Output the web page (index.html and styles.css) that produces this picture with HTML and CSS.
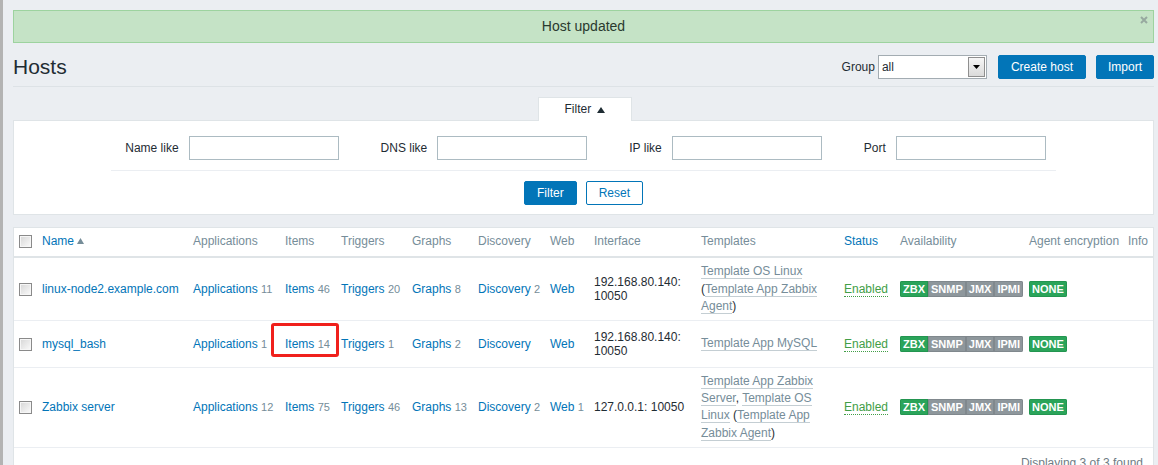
FILE: index.html
```html
<!DOCTYPE html>
<html lang="en">
<head>
<meta charset="utf-8">
<title>Hosts</title>
<link rel="stylesheet" href="styles.css">
</head>
<body>
<div class="page">
  <div class="msg-good">
    Host updated
    <span class="msg-close"><svg width="8" height="8" viewBox="0 0 8 8"><path d="M1 1L7 7M7 1L1 7" stroke="#97a99f" stroke-width="2"/></svg></span>
  </div>

  <header class="header">
    <h1 class="title">Hosts</h1>
    <div class="controls">
      <span class="ctl-label">Group</span>
      <div class="select">
        <span class="select-value">all</span>
        <span class="select-btn"><svg width="7" height="4" viewBox="0 0 7 4"><path d="M0 0H7L3.5 4Z" fill="#000"/></svg></span>
      </div>
      <button class="btn btn-create">Create host</button>
      <button class="btn btn-import">Import</button>
    </div>
  </header>

  <div class="filter">
    <div class="filter-tabs">
      <div class="filter-tab">Filter <svg width="8" height="6" viewBox="0 0 8 6"><path d="M0 6L4 0L8 6Z" fill="#1f2c33"/></svg></div>
    </div>
    <div class="filter-panel">
      <div class="filter-row-wrap">
        <div class="filter-row">
          <div class="filter-field"><span>Name like</span><input class="input" type="text"></div>
          <div class="filter-field"><span>DNS like</span><input class="input" type="text"></div>
          <div class="filter-field"><span>IP like</span><input class="input" type="text"></div>
          <div class="filter-field"><span>Port</span><input class="input" type="text"></div>
        </div>
      </div>
      <div class="filter-buttons">
        <button class="btn">Filter</button>
        <button class="btn btn-alt">Reset</button>
      </div>
    </div>
  </div>

  <div class="list">
    <table class="hosts">
      <colgroup>
        <col class="c-chk"><col class="c-name"><col class="c-app"><col class="c-items"><col class="c-trig"><col class="c-graphs"><col class="c-disc"><col class="c-web"><col class="c-iface"><col class="c-tpl"><col class="c-status"><col class="c-avail"><col class="c-enc"><col class="c-info">
      </colgroup>
      <thead>
        <tr>
          <th><span class="chk"></span></th>
          <th><a class="link" href="#">Name</a><svg class="sort" width="7" height="6" viewBox="0 0 7 6"><path d="M0 6L3.5 0L7 6Z" fill="#768d99"/></svg></th>
          <th>Applications</th>
          <th>Items</th>
          <th>Triggers</th>
          <th>Graphs</th>
          <th>Discovery</th>
          <th>Web</th>
          <th>Interface</th>
          <th>Templates</th>
          <th><a class="link" href="#">Status</a></th>
          <th>Availability</th>
          <th>Agent encryption</th>
          <th>Info</th>
        </tr>
      </thead>
      <tbody>
        <tr>
          <td><span class="chk"></span></td>
          <td><a class="link" href="#">linux-node2.example.com</a></td>
          <td class="nw"><a class="link" href="#">Applications</a> <span class="count">11</span></td>
          <td class="nw"><a class="link" href="#">Items</a> <span class="count">46</span></td>
          <td class="nw"><a class="link" href="#">Triggers</a> <span class="count">20</span></td>
          <td class="nw"><a class="link" href="#">Graphs</a> <span class="count">8</span></td>
          <td class="nw"><a class="link" href="#">Discovery</a> <span class="count">2</span></td>
          <td class="nw"><a class="link" href="#">Web</a></td>
          <td>192.168.80.140: 10050</td>
          <td class="tpl"><a class="link-alt" href="#">Template OS Linux</a> (<a class="link-alt" href="#">Template App Zabbix Agent</a>)</td>
          <td><span class="enabled">Enabled</span></td>
          <td><span class="st-group"><span class="st st-green">ZBX</span><span class="st st-grey">SNMP</span><span class="st st-grey">JMX</span><span class="st st-grey">IPMI</span></span></td>
          <td><span class="st-group"><span class="st st-green">NONE</span></span></td>
          <td></td>
        </tr>
        <tr>
          <td><span class="chk"></span></td>
          <td><a class="link" href="#">mysql_bash</a></td>
          <td class="nw"><a class="link" href="#">Applications</a> <span class="count">1</span></td>
          <td class="nw marked"><a class="link" href="#">Items</a> <span class="count">14</span><span class="annot"></span></td>
          <td class="nw"><a class="link" href="#">Triggers</a> <span class="count">1</span></td>
          <td class="nw"><a class="link" href="#">Graphs</a> <span class="count">2</span></td>
          <td class="nw"><a class="link" href="#">Discovery</a></td>
          <td class="nw"><a class="link" href="#">Web</a></td>
          <td>192.168.80.140: 10050</td>
          <td class="tpl"><a class="link-alt" href="#">Template App MySQL</a></td>
          <td><span class="enabled">Enabled</span></td>
          <td><span class="st-group"><span class="st st-green">ZBX</span><span class="st st-grey">SNMP</span><span class="st st-grey">JMX</span><span class="st st-grey">IPMI</span></span></td>
          <td><span class="st-group"><span class="st st-green">NONE</span></span></td>
          <td></td>
        </tr>
        <tr>
          <td><span class="chk"></span></td>
          <td><a class="link" href="#">Zabbix server</a></td>
          <td class="nw"><a class="link" href="#">Applications</a> <span class="count">12</span></td>
          <td class="nw"><a class="link" href="#">Items</a> <span class="count">75</span></td>
          <td class="nw"><a class="link" href="#">Triggers</a> <span class="count">46</span></td>
          <td class="nw"><a class="link" href="#">Graphs</a> <span class="count">13</span></td>
          <td class="nw"><a class="link" href="#">Discovery</a> <span class="count">2</span></td>
          <td class="nw"><a class="link" href="#">Web</a> <span class="count">1</span></td>
          <td>127.0.0.1: 10050</td>
          <td class="tpl"><a class="link-alt" href="#">Template App Zabbix Server</a>, <a class="link-alt" href="#">Template OS Linux</a> (<a class="link-alt" href="#">Template App Zabbix Agent</a>)</td>
          <td><span class="enabled">Enabled</span></td>
          <td><span class="st-group"><span class="st st-green">ZBX</span><span class="st st-grey">SNMP</span><span class="st st-grey">JMX</span><span class="st st-grey">IPMI</span></span></td>
          <td><span class="st-group"><span class="st st-green">NONE</span></span></td>
          <td></td>
        </tr>
      </tbody>
    </table>
    <div class="paging">Displaying 3 of 3 found</div>
  </div>
</div>
</body>
</html>
```

FILE: styles.css
```css
html, body {
  margin: 0;
  height: 465px;
  overflow: hidden;
}
body {
  background: #ebeef2;
  border-left: 3px solid #b3b3b3;
  box-sizing: border-box;
  font-family: "Liberation Sans", Arial, sans-serif;
  font-size: 12px;
  color: #1f2c33;
}
.page {
  padding: 10px 4px 0 10px;
}

/* message */
.msg-good {
  position: relative;
  height: 33px;
  box-sizing: border-box;
  border: 1px solid #9dd39f;
  background: #c5e3c6;
  text-align: center;
  line-height: 31px;
  font-size: 14px;
  color: #2a3a2e;
}
.msg-close {
  position: absolute;
  right: 5px;
  top: 5px;
  width: 8px;
  height: 8px;
  line-height: 0;
}

/* header */
.header {
  margin-top: 12px;
  height: 24px;
  padding-bottom: 7px;
  border-bottom: 1px solid #dde2e6;
  display: flex;
  align-items: center;
  justify-content: space-between;
}
.title {
  margin: 0;
  font-size: 21px;
  font-weight: normal;
  line-height: 24px;
  color: #1f2c33;
}
.controls {
  display: flex;
  align-items: center;
}
.ctl-label {
  margin-right: 3px;
}
.select {
  width: 109px;
  height: 24px;
  box-sizing: border-box;
  border: 1px solid #a3acb2;
  background: #fff;
  display: flex;
  align-items: center;
  justify-content: space-between;
  margin-right: 11px;
}
.select-value {
  padding-left: 3px;
}
.select-btn {
  width: 17px;
  height: 20px;
  margin-right: 1px;
  box-sizing: border-box;
  border: 1px solid #8f8f8f;
  background: linear-gradient(#f6f6f6, #dadada);
  display: flex;
  align-items: center;
  justify-content: center;
}
.btn {
  height: 24px;
  box-sizing: border-box;
  padding: 0 12px;
  border: 1px solid #0275b8;
  border-radius: 2px;
  background: #0275b8;
  color: #fff;
  font-family: "Liberation Sans", Arial, sans-serif;
  font-size: 12px;
  line-height: 22px;
  cursor: pointer;
}
.btn-create {
  margin-right: 10px;
}
.btn-import {
  padding: 0 11px;
}
.btn-alt {
  background: #fff;
  color: #0275b8;
}

/* filter */
.filter {
  margin-top: 10px;
}
.filter-tabs {
  display: flex;
  justify-content: center;
}
.filter-tab {
  width: 94px;
  height: 24px;
  box-sizing: border-box;
  border: 1px solid #dfe4e7;
  border-bottom: none;
  background: #fff;
  margin-bottom: -1px;
  margin-left: 2px;
  text-align: center;
  line-height: 23px;
  position: relative;
  z-index: 1;
}
.filter-tab svg {
  margin-left: 2px;
}
.filter-panel {
  background: #fff;
  border: 1px solid #dfe4e7;
}
.filter-row-wrap {
  display: flex;
  justify-content: center;
  padding-top: 15px;
}
.filter-row {
  display: flex;
  gap: 42px;
  padding: 0 10px 10px 14px;
  border-bottom: 1px solid #ebeef2;
}
.filter-field {
  display: flex;
  align-items: center;
  gap: 10px;
}
.input {
  width: 150px;
  height: 24px;
  box-sizing: border-box;
  border: 1px solid #acbbc2;
  margin: 0;
  padding: 0 5px;
  font-family: "Liberation Sans", Arial, sans-serif;
  font-size: 12px;
}
.filter-buttons {
  display: flex;
  justify-content: center;
  gap: 9px;
  padding: 10px 0 9px;
}

/* list */
.list {
  margin-top: 12px;
  background: #fff;
  border: 1px solid #dfe4e7;
  border-bottom: none;
  height: 300px;
}
.hosts {
  width: 100%;
  border-collapse: collapse;
  table-layout: fixed;
}
.c-chk { width: 23px; }
.c-name { width: 151px; }
.c-app { width: 92px; }
.c-items { width: 56px; }
.c-trig { width: 71px; }
.c-graphs { width: 66px; }
.c-disc { width: 72px; }
.c-web { width: 44px; }
.c-iface { width: 107px; }
.c-tpl { width: 143px; }
.c-status { width: 56px; }
.c-avail { width: 129px; }
.c-enc { width: 99px; }
.c-info { width: 30px; }

.hosts th {
  text-align: left;
  font-weight: normal;
  color: #768d99;
  padding: 6px 5px 8px;
  line-height: 14px;
  border-bottom: 2px solid #dfe4e7;
  white-space: nowrap;
  overflow: hidden;
}
.hosts td {
  padding: 5px;
  line-height: 14.4px;
  border-bottom: 1px solid #ebeef2;
  vertical-align: middle;
}
.hosts tbody tr {
  height: 47px;
}
.hosts .nw {
  white-space: nowrap;
}
.hosts .tpl {
  line-height: 17.2px;
}
.link {
  color: #0275b8;
  text-decoration: none;
}
.sort {
  margin-left: 3px;
  vertical-align: 1px;
}
.count {
  color: #768d99;
  font-size: 11px;
}
.link-alt {
  color: #768d99;
  text-decoration: none;
  border-bottom: 1px solid #c4ced3;
}
.enabled {
  color: #429e47;
  border-bottom: 1px dotted #429e47;
}
.chk {
  display: inline-block;
  width: 13px;
  height: 13px;
  box-sizing: border-box;
  border: 1px solid #8a8a8a;
  box-shadow: inset 0 0 0 1px #f6f6f6;
  background: linear-gradient(135deg, #d6d6d6, #fbfbfb);
  vertical-align: middle;
}
.st-group {
  display: inline-flex;
  border-radius: 2px;
  overflow: hidden;
  vertical-align: middle;
}
.st {
  display: inline-block;
  font-size: 11px;
  font-weight: bold;
  color: #fff;
  line-height: 14px;
  padding: 0 2px;
  border: 1px solid;
}
.st-green {
  background: #2aa45a;
  border-color: #239550;
}
.st-grey {
  background: #8e979c;
  border-color: #80888d;
}
.marked {
  position: relative;
}
.annot {
  position: absolute;
  left: -9px;
  top: 2px;
  width: 68px;
  height: 34px;
  box-sizing: border-box;
  border: 3px solid #f0201c;
  border-radius: 3px;
  pointer-events: none;
}
.paging {
  text-align: right;
  padding: 8px 10px 0 0;
  color: #6f7c84;
  line-height: 14.4px;
}
```
